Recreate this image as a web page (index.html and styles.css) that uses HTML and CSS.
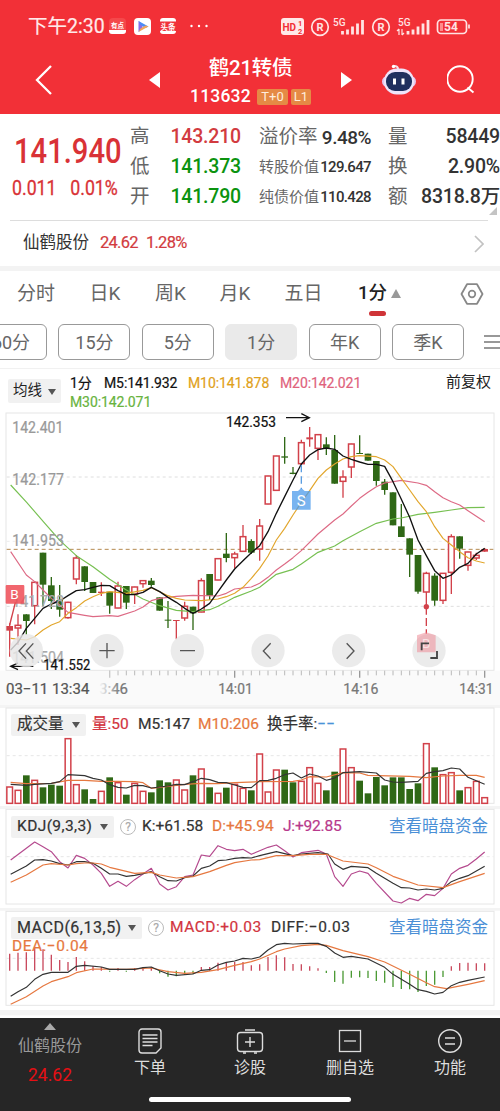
FILE: index.html
```html
<!DOCTYPE html>
<html lang="zh-CN">
<head>
    <meta charset="UTF-8">
    <meta name="viewport" content="width=device-width, initial-scale=1.0">
    <title>鹤21转债 113632</title>
    <link rel="stylesheet" href="styles.css">
</head>
<body>
    <header class="top">
        <div class="status">
            <span class="clock">下午2:30</span>
            <svg class="apps" width="92" height="20" viewBox="0 0 92 20">
                <rect x="0" y="1" width="17" height="16" rx="4" fill="#f4484b"/>
                <path d="M0 13h17v1a3 3 0 0 1-3 3H3a3 3 0 0 1-3-3z" fill="#fff"/>
                <text x="2" y="11" font-size="6.5" font-weight="700" fill="#fff">有点</text>
                <rect x="25" y="1" width="17" height="17" rx="4" fill="#fff"/>
                <path d="M29.500 4v11l4-3v-5z" fill="#8a6be8"/>
                <path d="M29.500 4l10 5.500-3 1.500-5-3z" fill="#4a8df5"/>
                <path d="M29.500 15l10-5.500-3-1-5 3z" fill="#f2a65a"/>
                <rect x="51" y="1" width="16" height="16" rx="3" fill="#fff"/>
                <rect x="51" y="4.500" width="16" height="9.500" fill="#f0323a"/>
                <text x="51.500" y="12.500" font-size="7.500" font-weight="700" fill="#fff">头条</text>
                <g fill="#fff"><circle cx="82.500" cy="9" r="1.200"/><circle cx="90" cy="9" r="1.200"/><circle cx="97.500" cy="9" r="1.200"/></g>
            </svg>
            <svg class="signals" width="192" height="20" viewBox="0 0 192 20">
                <rect x="0" y="1" width="23" height="17" rx="3" fill="#ffe9e9"/>
                <text x="1.500" y="13.500" font-size="10" font-weight="700" fill="#f23037">HD</text>
                <text x="17" y="9" font-size="7.500" font-weight="700" fill="#f23037">1</text>
                <text x="17" y="16.500" font-size="7.500" font-weight="700" fill="#f23037">2</text>
                <g fill="none" stroke="#ffe3e3" stroke-width="1.700">
                    <circle cx="39" cy="10" r="8.300"/><circle cx="100" cy="10" r="8.300"/>
                    <rect x="156.500" y="3" width="29" height="13.500" rx="3.500"/>
                    <path d="M188 7.500v4"/>
                </g>
                <g fill="#ffe3e3" font-weight="700">
                    <text x="35.500" y="14" font-size="11">R</text><text x="96.500" y="14" font-size="11">R</text>
                    <text x="52" y="8.500" font-size="10" font-weight="500">5G</text>
                    <text x="117" y="8.500" font-size="10" font-weight="500">5G</text>
                    <text x="163" y="14" font-size="12">54</text>
                </g>
                <path d="M60 17.500v-3.500m5 3.500v-5m5 5v-8m5 8v-11m5 11v-14.500M125.500 17.500v-3.500m5 3.500v-5m5 5v-8m5 8v-11m5 11v-14.500" transform="translate(1.500 0)" stroke="#ffe3e3" stroke-width="2.800"/>
                <path d="M118 12v6m-2-4l2-2m3 0v6m2-2l-2 2" stroke="#ffe3e3" stroke-width="1.200" fill="none"/>
                <path d="M160.500 6v8" stroke="#ff8b8b" stroke-width="3"/>
            </svg>
        </div>
        <div class="titlebar">
            <svg class="back" width="20" height="32" viewBox="0 0 20 32"><path d="M16 2L2 16l14 14" fill="none" stroke="#fff" stroke-width="2.300"/></svg>
            <svg class="prev" width="12" height="16" viewBox="0 0 12 16"><path d="M11 0v16L0 8z" fill="#fff"/></svg>
            <div class="name">
                <h1>鹤21转债</h1>
                <p><span class="code">113632</span><span class="badge">T+0</span><span class="badge l1">L1</span></p>
            </div>
            <svg class="next" width="12" height="16" viewBox="0 0 12 16"><path d="M0 0v16l11-8z" fill="#fff"/></svg>
            <svg class="robot" width="34" height="32" viewBox="0 0 34 32">
                <path d="M16 5c0-2-1-3-4-3" fill="none" stroke="#f5dfe9" stroke-width="2"/>
                <circle cx="11.500" cy="2.500" r="1.700" fill="#fff"/>
                <rect x="0" y="12" width="34" height="11" rx="5.500" fill="#e6c7ef"/>
                <rect x="2" y="4.500" width="30" height="26" rx="12.500" fill="#eee4fa"/>
                <rect x="4" y="8" width="26" height="19" rx="9" fill="#1f2f5e"/>
                <path d="M12.500 14.500v6m8.500-6v6" stroke="#fff" stroke-width="3"/>
            </svg>
            <svg class="search" width="30" height="30" viewBox="0 0 30 30"><circle cx="13" cy="14" r="12.700" fill="none" stroke="#fff" stroke-width="1.900"/><path d="M20.500 22.500l6 5" stroke="#fff" stroke-width="1.900"/></svg>
        </div>
    </header>

    <section class="quote">
        <div class="price">
            <div class="last">141.940</div>
            <div class="change"><span>0.011</span><span>0.01%</span></div>
        </div>
        <div class="stats">
            <span class="key">高</span><b class="up">143.210</b>
            <span class="key mid">溢价率</span><b class="mid">9.48%</b>
            <span class="key">量</span><b>58449</b>
            <span class="key">低</span><b class="down">141.373</b>
            <span class="key small">转股价值</span><b class="small">129.647</b>
            <span class="key">换</span><b>2.90%</b>
            <span class="key">开</span><b class="down">141.790</b>
            <span class="key small">纯债价值</span><b class="small">110.428</b>
            <span class="key">额</span><b>8318.8万</b>
        </div>
        <svg class="corner" width="8" height="8" viewBox="0 0 8 8"><path d="M8 0v8H0z" fill="#c4c4c4"/></svg>
    </section>
    <section class="stock">
        <span class="stock-name">仙鹤股份</span><span class="stock-price">24.62</span><span class="stock-rate">1.28%</span>
        <svg width="10" height="18" viewBox="0 0 10 18"><path d="M1 1l8 8-8 8" fill="none" stroke="#c2c2c2" stroke-width="1.700"/></svg>
    </section>

    <nav class="tabs">
        <span>分时</span><span>日K</span><span>周K</span><span>月K</span><span>五日</span>
        <span class="active">1分<svg width="10" height="9" viewBox="0 0 10 9"><path d="M5 0l5 9H0z" fill="#999"/></svg></span>
        <svg class="gear" width="24" height="22" viewBox="0 0 24 22"><path d="M7 1.200h10L22.500 11 17 20.800H7L1.500 11z" fill="none" stroke="#888" stroke-width="1.800" stroke-linejoin="round"/><circle cx="12" cy="11" r="3.300" fill="none" stroke="#888" stroke-width="1.700"/></svg>
    </nav>
    <div class="chips">
        <span>60分</span><span>15分</span><span>5分</span><span class="on">1分</span><span>年K</span><span>季K</span>
        <svg width="16" height="16" viewBox="0 0 16 16"><path d="M0 2h16M0 8h16M0 14h16" stroke="#777" stroke-width="1.400"/></svg>
    </div>

    <div class="ma">
        <span class="pick">均线<i></i></span>
        <div class="ma-list">
            <span>1分</span><span>M5:141.932</span><span class="gold">M10:141.878</span><span class="pink">M20:142.021</span>
            <span class="green">M30:142.071</span>
        </div>
        <span class="adjust">前复权</span>
    </div>
    <svg id="kline" class="kline" width="500" height="300" viewBox="0 0 1500 900"></svg>

    <section class="panel volume">
        <svg id="volume" width="500" height="101" viewBox="0 0 1500 303"></svg>
        <div class="legend">
            <span class="pick">成交量<i></i></span>
            <span class="red">量:50</span><span>M5:147</span><span class="orange">M10:206</span><span>换手率:<em>−−</em></span>
        </div>
    </section>
    <section class="panel kdj">
        <svg id="kdj" width="500" height="102" viewBox="0 303 1500 306"></svg>
        <div class="legend">
            <span class="pick">KDJ(9,3,3)<i></i></span><span class="help">?</span>
            <span>K:+61.58</span><span class="orange">D:+45.94</span><span class="purple">J:+92.85</span><a>查看暗盘资金</a>
        </div>
    </section>
    <section class="panel macd">
        <svg id="macd" width="500" height="110" viewBox="0 144 1500 330"></svg>
        <div class="legend">
            <span class="pick">MACD(6,13,5)<i></i></span><span class="help">?</span>
            <span class="red">MACD:+0.03</span><span>DIFF:−0.03</span><a>查看暗盘资金</a>
            <span class="orange dea">DEA:−0.04</span>
        </div>
    </section>

    <footer class="bottom">
        <div class="actions">
            <div class="own">
                <svg width="12" height="7" viewBox="0 0 12 7"><path d="M6 0l6 7H0z" fill="#aaa"/></svg>
                <span>仙鹤股份</span><b>24.62</b>
            </div>
            <div>
                <svg width="24" height="26" viewBox="0 0 24 26" fill="none" stroke="#ddd" stroke-width="1.400"><path d="M4 1h16a3 3 0 0 1 3 3v16l-5 5H4a3 3 0 0 1-3-3V4a3 3 0 0 1 3-3zM4.500 7h15M4.500 10.500h15M4.500 14h15M4.500 17.500h10"/></svg>
                <span>下单</span>
            </div>
            <div>
                <svg width="28" height="26" viewBox="0 0 28 26" fill="none" stroke="#ddd" stroke-width="1.400"><rect x="1.500" y="4.500" width="25" height="19" rx="3"/><path d="M9 2h10M14 9v10M9 14h10M7 25h3M18 25h3"/></svg>
                <span>诊股</span>
            </div>
            <div>
                <svg width="24" height="26" viewBox="0 0 24 26" fill="none" stroke="#ddd" stroke-width="1.300"><rect x="1.500" y="2.500" width="21" height="21"/><path d="M6 13h12"/></svg>
                <span>删自选</span>
            </div>
            <div>
                <svg width="26" height="26" viewBox="0 0 26 26" fill="none" stroke="#ddd" stroke-width="1.400"><circle cx="13" cy="13" r="11.300"/><path d="M8 10h10M8 16h10"/></svg>
                <span>功能</span>
            </div>
        </div>
        <div class="home"></div>
    </footer>
    <script src="chart.js"></script>
</body>
</html>
```
FILE: styles.css
```css
* {
    box-sizing: border-box;
}
body {
    margin: 0;
    width: 500px;
    height: 1111px;
    overflow: hidden;
    background-color: #fff;
    color: #333;
    font-family: Roboto, "Noto Sans CJK SC", sans-serif;
    line-height: 1;
}
svg {
    display: block;
    flex: none;
}
span, b, a {
    white-space: nowrap;
}
.top {
    height: 114px;
    background-color: #f23037;
    color: #fff;
}
.status {
    display: flex;
    align-items: center;
    height: 54px;
    padding-left: 28px;
}
.clock {
    width: 81px;
    font-size: 19.5px;
    color: #ffeaea;
    -webkit-text-stroke: 0.2px #ffeaea;
}
.apps {
    margin-right: 80px;
    overflow: visible;
}
.titlebar {
    display: flex;
    align-items: center;
    height: 52px;
    padding-left: 35px;
}
.prev {
    margin-left: 94px;
}
.name {
    width: 121px;
    margin: 0 30px 0 29px;
    text-align: center;
}
.name h1 {
    margin: 3px 0 9px;
    font-size: 20.5px;
    font-weight: 500;
    line-height: 22px;
    letter-spacing: -0.3px;
}
.name p {
    display: flex;
    align-items: center;
    margin: 0;
}
.code {
    width: 67px;
    font-size: 17.5px;
    font-weight: 500;
    letter-spacing: 0.2px;
    text-align: left;
}
.badge {
    width: 31px;
    height: 16px;
    border-radius: 2px;
    background-color: #e58a45;
    color: #ffeedd;
    font-size: 13px;
    line-height: 16px;
}
.badge.l1 {
    width: 20px;
    margin-left: 3px;
}
.robot {
    margin: 0 31px 0 29px;
}
.quote {
    display: grid;
    grid-template-columns: 120px 370px;
    height: 107px;
    border-bottom: 1px solid #ddd;
    margin: 0 12px 0 10px;
}
.price {
    padding: 20px 0 0 4px;
    color: #d93236;
}
.last {
    font-size: 34.5px;
    font-weight: 500;
    transform: scaleX(0.845);
    transform-origin: left;
    width: 125px;
}
.change {
    display: flex;
    gap: 15px;
    width: 125px;
    margin: 10px 0 0 -2px;
    font-size: 19.5px;
    transform: scaleX(0.91);
    transform-origin: left;
    -webkit-text-stroke: 0.3px #d93236;
}
.stats {
    display: grid;
    grid-template-columns: 30px 81px 18px 60px 52px 17px 19px 93px;
    grid-template-rows: repeat(3, 30px);
    align-items: center;
    padding-top: 8px;
}
.stats > :nth-child(6n+3) {
    grid-column: 4;
}
.stats > :nth-child(6n+5) {
    grid-column: 7;
}
.key {
    color: #666;
    font-size: 19.5px;
}
.stats b {
    font-size: 19.5px;
    font-weight: 500;
    letter-spacing: -0.2px;
    justify-self: end;
}
.stats b.up {
    color: #d23b40;
}
.stats b.down {
    color: #0b930f;
}
.stats b.mid {
    font-size: 19px;
    letter-spacing: -0.5px;
}
.stats .key.small {
    font-size: 15px;
}
.stats b.small {
    font-size: 15px;
    letter-spacing: -0.65px;
}
.corner {
    grid-column: 2;
    justify-self: end;
    margin-top: -9px;
    margin-right: 3px;
}
.stock {
    display: flex;
    align-items: center;
    height: 45px;
    padding-left: 23px;
    font-size: 16.5px;
}
.stock-name {
    width: 77px;
}
.stock-price, .stock-rate {
    width: 46px;
    color: #d23b40;
    letter-spacing: -0.75px;
    -webkit-text-stroke: 0.2px #d23b40;
}
.stock-rate {
    width: 328px;
}
.tabs {
    display: grid;
    grid-template-columns: 72px 66px 65px 64px 73px 79px 1fr;
    align-items: center;
    justify-items: center;
    height: 53px;
    padding-bottom: 3px;
    border-top: 5px solid #f3f3f3;
    color: #666;
    font-size: 19px;
}
.tabs .active {
    display: flex;
    align-items: center;
    gap: 4px;
    color: #222;
    font-size: 18.5px;
    font-weight: 500;
    position: relative;
}
.tabs .active::after {
    content: "";
    position: absolute;
    left: 11px;
    top: 27px;
    width: 17px;
    height: 5px;
    border-radius: 3px;
    background-color: #cf3438;
}
.gear {
    margin-left: 25px;
}
.chips {
    display: flex;
    align-items: center;
    gap: 11.4px;
    height: 50px;
    padding-bottom: 4px;
    margin-left: -25px;
    border-bottom: 1px solid #f1f1f1;
}
.chips span {
    flex: none;
    width: 72px;
    height: 36px;
    border: 1px solid #999;
    border-radius: 6px;
    color: #666;
    font-size: 18px;
    line-height: 35px;
    text-align: center;
}
.chips .on {
    border-color: #eaeaea;
    background-color: #eaeaea;
}
.chips svg {
    margin-left: 9px;
}
.ma {
    display: flex;
    height: 36px;
    padding: 5px 0 0 8px;
    color: #222;
}
.pick {
    display: flex;
    align-items: center;
    justify-content: space-between;
    height: 22px;
    padding: 0 6px;
    border-radius: 2px;
    background-color: #f1f1f1;
}
.pick i {
    border: 4.5px solid transparent;
    border-top: 6px solid #555;
    border-bottom: 0;
}
.ma .pick {
    width: 53px;
    height: 24px;
    margin: 5px 9px 0 0;
    padding: 1px 5px 0;
    font-size: 14.5px;
}
.ma-list {
    display: grid;
    grid-template-columns: 34px 84px 92px 166px;
    grid-template-rows: 18px 19px;
    align-items: center;
    height: 37px;
    font-size: 14px;
    letter-spacing: -0.1px;
    color: #111;
    -webkit-text-stroke: 0.2px;
}
.ma-list .green {
    grid-column: 1 / 4;
}
.adjust {
    font-size: 15px;
    padding-top: 1px;
}
.gold {
    color: #dfa11b;
}
.pink {
    color: #e0627c;
}
.green {
    color: #68b33e;
}
.red {
    color: #d23440;
}
.orange {
    color: #e67840;
}
.purple {
    color: #b8398c;
}
.panel {
    display: grid;
}
.panel > * {
    grid-area: 1 / 1;
}
.legend {
    display: grid;
    align-items: center;
    align-content: start;
    margin-left: 11px;
    font-size: 15.5px;
    grid-auto-rows: 22px;
    -webkit-text-stroke: 0.2px;
}
.volume .legend {
    grid-template-columns: 81px 46px 60px 69px 90px;
    padding-top: 9px;
}
.volume .pick {
    width: 75px;
}
.kdj .legend {
    grid-template-columns: 109px 22px 70px 71px 106px 100px;
    padding-top: 10px;
}
.kdj .pick {
    width: 103px;
    letter-spacing: 0.4px;
}
.kdj .purple {
    letter-spacing: -0.2px;
}
.macd .legend {
    grid-template-columns: 137px 22px 101px 118px 100px;
    padding-top: 9px;
}
.macd .legend > * {
    letter-spacing: 0.5px;
}
.macd .pick {
    width: 131px;
    font-size: 16px;
}
.macd .dea {
    grid-column: 1 / 3;
    margin: -6px 0 0 1px;
}
.legend .help {
    width: 16px;
    height: 16px;
    border: 1px solid #bbb;
    border-radius: 50%;
    color: #aaa;
    font-size: 12px;
    line-height: 15px;
    letter-spacing: 0;
    text-align: center;
}
.legend em {
    color: #4a93d8;
    font-style: normal;
}
.legend a {
    color: #4a8fd6;
    font-size: 16.5px;
    letter-spacing: 0;
    -webkit-text-stroke: 0;
}
.macd .legend a {
    letter-spacing: 0;
}
.bottom {
    height: 93px;
    background-color: #262626;
    color: #ddd;
}
.actions {
    display: grid;
    grid-template-columns: repeat(5, 100px);
    height: 79px;
    font-size: 16px;
}
.actions div {
    display: flex;
    flex-direction: column;
    align-items: center;
    gap: 6px;
    padding-top: 10px;
}
.actions .own {
    gap: 7px;
    padding-top: 5px;
    color: #999;
}
.own span {
    margin-top: 1px;
}
.own b {
    margin-top: 6px;
    color: #e60f14;
    font-size: 17.5px;
    font-weight: 400;
}
.home {
    width: 202px;
    height: 5px;
    margin: 0 auto;
    border-radius: 3px;
    background-color: #fff;
}
```
FILE: chart.js
```js
// three units per pixel, one bar every 25 units
const STEP = 25;
const LEFT = 29;
const RED = '#d2414a';
const GREEN = '#2f6816';

const candles = [
    ['R', 655, 663, 677, 755], ['r', 628, 660, 670, 720], ['g', 628, 628, 648, 690], ['r', 528, 531, 603, 658],
    ['g', 443, 443, 539, 603], ['g', 516, 541, 588, 612], ['g', 540, 585, 614, 635], ['r', 590, 591, 639, 641],
    ['r', 450, 458, 523, 538], ['g', 484, 484, 531, 558], ['g', 531, 531, 564, 564], ['R', 532, 560, 564, 573],
    ['g', 560, 560, 602, 626], ['r', 530, 542, 610, 610], ['g', 543, 543, 593, 612], ['r', 545, 545, 568, 597],
    ['r', 526, 526, 537, 548], ['g', 519, 527, 540, 545], ['g', 577, 577, 617, 617], ['g', 588, 644, 647, 669],
    ['R', 645, 645, 648, 703], ['r', 590, 603, 640, 647], ['g', 605, 605, 625, 675], ['r', 520, 526, 622, 622],
    ['g', 507, 507, 572, 585], ['r', 460, 460, 526, 526], ['g', 384, 446, 459, 472], ['r', 440, 446, 459, 490],
    ['r', 360, 394, 440, 440], ['g', 403, 408, 443, 447], ['r', 342, 362, 433, 467], ['r', 212, 212, 298, 298],
    ['r', 152, 152, 257, 257], ['g', 96, 154, 158, 176], ['g', 186, 203, 207, 208], ['r', 104, 112, 177, 183],
    ['R', 66, 97, 103, 125], ['r', 88, 88, 131, 165], ['g', 97, 118, 130, 150], ['g', 90, 135, 236, 236],
    ['r', 196, 215, 230, 278], ['r', 116, 116, 187, 219], ['g', 91, 144, 147, 147], ['g', 146, 146, 167, 167],
    ['g', 168, 168, 228, 242], ['g', 222, 230, 255, 269], ['g', 262, 262, 361, 361], ['g', 297, 364, 396, 396],
    ['g', 400, 400, 449, 516], ['g', 450, 450, 560, 566], ['r', 500, 504, 562, 605], ['g', 505, 512, 587, 602],
    ['r', 504, 504, 587, 597], ['r', 388, 394, 503, 567], ['g', 394, 394, 431, 461], ['r', 440, 440, 482, 497],
    ['r', 443, 450, 460, 465], ['R', 430, 432, 440, 440]
];
const ma5 = '32,735 54,712 79,670 104,640 129,610 154,597 179,588 204,572 229,557 254,554 279,547 304,541 329,542 354,557 379,569 404,569 429,562 454,547 479,560 504,577 529,592 554,610 579,625 604,612 629,595 654,560 679,525 704,492 729,467 754,443 779,422 804,380 829,325 854,275 879,225 904,177 929,150 954,134 979,129 1004,133 1029,153 1054,163 1079,171 1104,178 1129,178 1154,184 1179,230 1204,283 1229,337 1254,405 1279,452 1304,497 1329,520 1354,510 1379,487 1404,475 1429,447 1454,430';
const ma10 = '32,700 79,705 104,695 129,675 154,660 179,650 204,625 229,608 254,588 279,575 304,565 329,560 379,565 429,556 454,548 479,560 504,572 529,580 554,585 604,587 654,582 679,575 704,565 729,547 754,520 779,490 804,453 829,405 854,370 879,330 904,292 929,257 954,220 979,195 1004,177 1029,162 1054,155 1079,152 1129,155 1154,165 1179,185 1204,220 1229,255 1254,290 1279,320 1304,365 1329,400 1354,420 1379,440 1404,458 1429,468 1454,474';
const ma20 = '32,440 79,510 104,530 129,555 154,580 179,600 204,622 254,631 279,635 329,632 354,634 404,618 429,606 454,587 479,580 529,574 579,571 654,573 679,565 704,552 754,546 779,535 804,517 829,495 854,477 879,458 904,437 954,387 1004,345 1029,327 1054,303 1079,280 1104,262 1129,245 1154,234 1204,226 1254,234 1279,241 1304,260 1329,278 1354,290 1379,300 1404,317 1454,350';
const ma30 = '32,240 80,292 130,350 180,407 229,452 279,485 329,523 379,555 429,582 479,602 529,616 579,620 629,614 654,604 704,577 754,558 779,547 829,508 879,493 904,477 954,442 1004,423 1029,407 1079,380 1129,355 1179,342 1204,339 1254,328 1304,322 1354,315 1404,308 1454,307';

const volumeTops = [245, 255, 211, 225, 247, 239, 242, 100, 238, 253, 282, 258, 217, 232, 269, 234, 258, 262, 226, 232,
    224, 254, 211, 191, 247, 264, 248, 237, 249, 256, 146, 260, 194, 194, 232, 228, 187, 234, 256, 200,
    131, 187, 227, 265, 216, 241, 217, 217, 252, 235, 115, 187, 208, 202, 256, 247, 228, 277];
const vol5 = '32,238 79,241 104,238 154,235 179,230 204,209 254,212 279,220 304,225 329,239 354,247 379,249 404,241 429,242 454,249 504,243 529,238 554,239 579,230 604,220 629,224 654,232 679,233 704,240 729,247 754,248 779,227 804,226 829,220 854,209 879,204 904,219 929,207 954,213 979,226 1004,219 1029,203 1079,200 1129,204 1154,225 1179,231 1204,232 1254,229 1279,205 1304,200 1329,197 1354,189 1379,192 1404,217 1454,238';
const vol10 = '32,232 79,236 154,235 204,226 254,226 304,229 354,229 404,230 429,233 454,250 504,244 554,238 604,235 654,236 704,233 779,230 879,229 904,225 929,215 979,216 1029,203 1079,204 1104,211 1229,214 1279,218 1329,213 1379,211 1429,211 1454,217';

const kLine = '32,508 79,483 104,465 129,464 154,468 179,476 204,480 229,470 254,470 279,475 304,490 329,507 354,507 379,514 404,511 429,506 454,500 479,515 504,527 529,528 554,518 579,513 604,490 629,483 654,467 679,465 704,460 729,458 754,459 779,452 804,446 829,440 854,446 879,452 904,447 954,443 984,447 1004,477 1029,493 1054,484 1104,488 1129,505 1179,535 1204,548 1229,549 1254,555 1279,552 1304,555 1329,550 1354,530 1379,520 1404,512 1454,484';
const dLine = '32,532 79,510 104,495 129,480 154,476 204,480 229,476 254,474 279,474 304,477 329,487 354,493 404,505 454,502 479,510 529,519 579,515 629,500 679,481 704,473 754,465 779,464 829,452 879,452 929,448 979,448 1029,468 1104,477 1129,488 1179,514 1254,540 1329,548 1379,530 1454,505';
const jLine = '32,465 104,411 129,425 154,440 179,470 204,489 229,451 254,460 279,480 304,505 329,544 354,529 379,544 404,524 429,507 454,490 479,537 504,555 529,545 554,515 579,510 604,450 629,454 654,422 679,433 704,437 729,433 754,448 779,437 804,427 829,420 854,437 879,456 904,443 954,436 979,447 1004,515 1029,544 1054,507 1079,498 1104,505 1129,535 1179,588 1204,594 1229,580 1254,587 1279,568 1304,572 1329,550 1354,507 1379,490 1404,481 1429,462 1454,441';

const macdBars = [281, 278, 277, 262, 268, 284, 300, 306, 291, 304, 319, 321, 335, 324, 335, 324, 322, 321, 340, 350,
    349, 344, 342, 321, 321, 308, 307, 306, 306, 316, 313, 291, 286, 292, 312, 313, 319, 325, 339, 366,
    371, 353, 352, 354, 363, 368, 381, 387, 388, 396, 378, 374, 351, 319, 309, 308, 310, 310];
const diff = '32,409 54,395 79,382 104,358 129,343 154,337 204,337 229,319 254,316 304,321 329,328 404,328 429,323 454,321 479,332 504,342 529,346 579,342 604,331 629,329 654,315 679,307 704,303 729,295 754,297 779,291 804,270 829,254 854,250 879,252 929,250 954,250 979,259 1004,279 1029,292 1054,289 1104,297 1154,322 1179,343 1229,373 1254,389 1279,394 1304,402 1329,397 1354,377 1379,367 1404,361 1454,351';
const dea = '32,433 79,410 129,378 154,365 204,350 229,338 279,327 379,328 454,324 504,335 554,340 604,337 654,329 704,316 754,305 779,297 829,275 854,267 904,257 954,253 979,256 1029,272 1104,290 1154,306 1229,343 1279,368 1304,380 1339,386 1404,373 1454,362';

function line(points, color, width = 3.5) {
    return `<polyline points="${points}" fill="none" stroke="${color}" stroke-width="${width}" stroke-linejoin="round"/>`;
}
function path(d, color, width = 3, extra = '') {
    return `<path d="${d}" fill="none" stroke="${color}" stroke-width="${width}" ${extra}/>`;
}
function label(x, y, text, width, color, size = 47) {
    return `<text x="${x}" y="${y}" font-size="${size}" fill="${color}" stroke="${color}" stroke-width=".7" textLength="${width}" lengthAdjust="spacingAndGlyphs">${text}</text>`;
}
function box(x, top, bottom, color, filled) {
    return filled
        ? `<rect x="${x - 10}" y="${top}" width="20" height="${bottom - top}" fill="${color}"/>`
        : `<rect x="${x - 8.5}" y="${top + 1}" width="17" height="${bottom - top - 2}" fill="#fff" stroke="${color}" stroke-width="4.5"/>`;
}
function frame(top, bottom) {
    return `<rect x="18" y="${top}" width="1464" height="${bottom - top}" fill="none" stroke="#e6e6e6" stroke-width="3"/>`;
}
function band(top, bottom) {
    return `<rect x="0" y="${top}" width="1500" height="${bottom - top}" fill="#f4f4f4"/>`;
}
function dash(y, color = '#dedede', gap = '9 9') {
    return path(`M20 ${y}H1480`, color, 3, `stroke-dasharray="${gap}"`);
}

function drawKline() {
    let s = '<defs><linearGradient id="fade"><stop offset="0" stop-color="#fafafa"/><stop offset=".3" stop-color="#fafafa"/><stop offset="1" stop-color="#fafafa" stop-opacity="0"/></linearGradient></defs>';
    s += '<rect x="0" y="797" width="1500" height="103" fill="#fafafa"/>';
    s += frame(24, 796) + dash(216) + dash(409, '#ececec') + dash(604);
    s += dash(433, '#b58a50', '12 9');
    candles.forEach(([kind, high, top, bottom, low], i) => {
        const x = LEFT + STEP * i;
        const color = kind === 'g' ? GREEN : RED;
        s += path(`M${x} ${high}V${low}`, color, 4) + box(x, top, bottom, color, kind !== 'r');
    });
    s += line(ma30, '#77c052') + line(ma20, '#dd6a85') + line(ma10, '#e2a62c') + line(ma5, '#111', 4);
    s += label(37, 83, '142.401', 153, '#999') + label(37, 241, '142.177', 155, '#999');
    s += label(37, 423, '141.953', 155, '#999') + label(37, 606, '141.728', 155, '#aaa') + label(37, 773, '141.504', 155, '#aaa');

    // trade marks
    s += path('M29 660L46 592', RED, 4) + '<rect x="17" y="540" width="56" height="56" rx="3" fill="#ef4b55" opacity=".85"/>';
    s += '<text x="31" y="583" font-size="41" fill="#fff">B</text>';
    s += path('M904 180V252', '#5b9de0', 4, 'stroke-dasharray="22 12"') + '<path d="M876 258h18l10-9 10 9h18v56h-56z" fill="#4c9beb" opacity=".75"/>';
    s += '<text x="890" y="302" font-size="45" fill="#fff">S</text>';
    s += path('M1279 605V686', RED, 4, 'stroke-dasharray="24 10"') + `<circle cx="1279" cy="605" r="8" fill="${RED}"/>`;

    // high and low of the visible range
    s += label(678, 66, '142.353', 150, '#111', 42) + path('M858 38H928M904 26L928 38L904 50', '#111', 4);
    s += label(130, 795, '141.552', 141, '#111', 42) + path('M100 784H32M54 774L32 784L54 794', '#111', 4);

    // round tool buttons
    for (const x of [79, 321, 562, 804, 1046, 1287]) {
        s += `<circle cx="${x}" cy="737" r="50" fill="#e7e7e7" opacity=".82"/>`;
    }
    s += '<path d="M1251 691l28-9 28 9v51h-56z" fill="#ee8d98" opacity=".55"/><text x="1266" y="730" font-size="40" fill="#fff" opacity=".6">B</text>';
    s += path('M78 715L57 738L78 761M100 715L79 738L100 761M298 737H344M321 714V760M540 737H585M812 715L790 738L812 761M1040 715L1062 738L1040 761', '#555', 4);
    s += path('M1265 736V715H1287M1291 759H1311V738', '#444', 5.5);

    for (let i = 12; i < 58; i++) {
        const major = (i - 12) % 15 === 0;
        s += path(`M${LEFT + STEP * i} 797V${major ? 818 : 811}`, '#999', major ? 4 : 2);
    }
    s += label(272, 868, '13:46', 112, '#777', 44);
    s += '<rect x="270" y="798" width="90" height="90" fill="url(#fade)"/>';
    s += label(18, 868, '03−11 13:34', 250, '#555', 44);
    s += label(655, 868, '14:01', 103, '#777', 44) + label(1030, 868, '14:16', 105, '#777', 44) + label(1378, 868, '14:31', 102, '#777', 44);
    document.getElementById('kline').innerHTML = s;
}

function drawVolume() {
    let s = band(-5, 9) + frame(9, 295) + dash(152, '#e6e6e6');
    volumeTops.forEach((top, i) => {
        const green = candles[i][0] === 'g';
        s += box(LEFT + STEP * i, top, 296, green ? GREEN : RED, green);
    });
    s += line(vol10, '#e67840') + line(vol5, '#333');
    document.getElementById('volume').innerHTML = s;
}

function drawKdj() {
    const s = band(298, 312) + frame(313, 597) + dash(455, '#e6e6e6')
        + line(jLine, '#b54a8e') + line(kLine, '#333') + line(dLine, '#e67840');
    document.getElementById('kdj').innerHTML = s;
}

function drawMacd() {
    let s = band(138, 152) + frame(154, 436) + dash(295, '#e6e6e6') + band(450, 466);
    macdBars.forEach((y, i) => {
        s += path(`M${LEFT + STEP * i} 332V${y}`, y > 332 ? '#4c9a35' : '#c94a5e', 4);
    });
    s += line(dea, '#e67840') + line(diff, '#333');
    document.getElementById('macd').innerHTML = s;
}

drawKline();
drawVolume();
drawKdj();
drawMacd();
```
